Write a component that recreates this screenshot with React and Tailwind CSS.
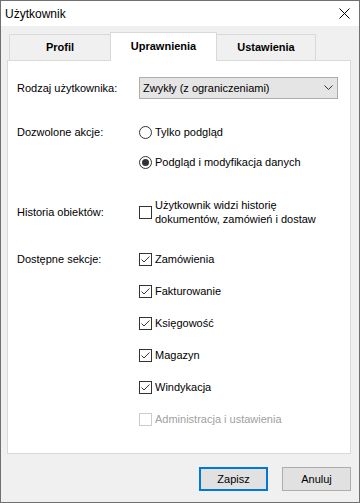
import React from "react";

function Check({ checked, disabled }) {
  return (
    <span
      className={
        disabled
          ? "w-[13px] h-[13px] border border-[#cccccc] bg-white flex items-center justify-center shrink-0"
          : "w-[13px] h-[13px] border border-[#333333] bg-white flex items-center justify-center shrink-0"
      }
    >
      {checked && (
        <svg width="11" height="11" viewBox="0 0 11 11">
          <polyline points="1.5,5.5 4,8 9.5,2.5" fill="none" stroke="#333333" strokeWidth="1" />
        </svg>
      )}
    </span>
  );
}

function Radio({ checked }) {
  return (
    <span className="w-[13px] h-[13px] rounded-full border border-[#333333] bg-white flex items-center justify-center shrink-0">
      {checked && <span className="w-[7px] h-[7px] rounded-full bg-[#333333]" />}
    </span>
  );
}

function Option({ control, label, disabled }) {
  return (
    <div className="h-[16px] flex items-center">
      {control}
      <span className={disabled ? "ml-[3px] leading-[16px] text-[#a0a0a0]" : "ml-[3px] leading-[16px] text-black"}>{label}</span>
    </div>
  );
}

export default function App() {
  return (
    <div className="w-[360px] h-[503px] bg-[#f0f0f0] border border-[#707070] flex flex-col font-['Liberation_Sans',Arial,sans-serif] text-[11px] text-black">
      {/* Title bar */}
      <div className="h-[25px] bg-white flex items-center justify-between pl-[4px] pr-[9px] shrink-0">
        <span className="text-[12px]">Użytkownik</span>
        <svg width="11" height="11" viewBox="0 0 11 11">
          <path d="M0.5 0.5 L10.5 10.5 M10.5 0.5 L0.5 10.5" stroke="#000" strokeWidth="1" fill="none" />
        </svg>
      </div>

      {/* Tabs */}
      <div className="mt-[6px] ml-[8px] h-[29px] flex items-end relative z-10 -mb-px">
        <div className="w-[102px] h-[27px] border border-[#d9d9d9] bg-[#f0f0f0] flex items-center justify-center font-bold">
          Profil
        </div>
        <div className="-ml-px w-[107px] h-[29px] border-t border-l border-r border-[#d9d9d9] bg-white flex items-center justify-center font-bold pb-[2px] relative z-10">
          Uprawnienia
        </div>
        <div className="-ml-px w-[100px] h-[27px] border border-[#d9d9d9] bg-[#f0f0f0] flex items-center justify-center font-bold">
          Ustawienia
        </div>
      </div>

      {/* Panel */}
      <div className="ml-[6px] w-[344px] h-[394px] bg-white border border-[#d9d9d9] flex flex-col pl-[9px] shrink-0">
        <div className="mt-[16px] h-[22px] flex items-center">
          <div className="w-[122px]">Rodzaj użytkownika:</div>
          <div className="w-[199px] h-[22px] bg-[#e5e5e5] border border-[#adadad] flex items-center justify-between pl-[3px] pr-[4px]">
            <span>Zwykły (z ograniczeniami)</span>
            <svg width="9" height="6" viewBox="0 0 9 6">
              <polyline points="0.5,0.5 4.5,4.5 8.5,0.5" fill="none" stroke="#333333" strokeWidth="1" />
            </svg>
          </div>
        </div>

        <div className="mt-[25px] flex items-start">
          <div className="w-[122px] h-[16px] flex items-center">Dozwolone akcje:</div>
          <div className="flex flex-col gap-[14px]">
            <Option control={<Radio />} label="Tylko podgląd" />
            <Option control={<Radio checked />} label="Podgląd i modyfikacja danych" />
          </div>
        </div>

        <div className="mt-[28px] flex items-center">
          <div className="w-[122px]">Historia obiektów:</div>
          <Check />
          <div className="ml-[3px] leading-[14px]">
            Użytkownik widzi historię
            <br />
            dokumentów, zamówień i dostaw
          </div>
        </div>

        <div className="mt-[25px] flex items-start">
          <div className="w-[122px] h-[16px] flex items-center">Dostępne sekcje:</div>
          <div className="flex flex-col gap-[16px]">
            <Option control={<Check checked />} label="Zamówienia" />
            <Option control={<Check checked />} label="Fakturowanie" />
            <Option control={<Check checked />} label="Księgowość" />
            <Option control={<Check checked />} label="Magazyn" />
            <Option control={<Check checked />} label="Windykacja" />
            <Option control={<Check disabled />} label="Administracja i ustawienia" disabled />
          </div>
        </div>
      </div>

      {/* Buttons */}
      <div className="mt-[13px] flex justify-end gap-[14px] pr-[8px]">
        <button className="w-[69px] h-[24px] bg-[#e1e1e1] border-2 border-[#0078d7] flex items-center justify-center text-[11px]">
          Zapisz
        </button>
        <button className="w-[69px] h-[24px] bg-[#e1e1e1] border border-[#adadad] flex items-center justify-center text-[11px]">
          Anuluj
        </button>
      </div>
    </div>
  );
}
